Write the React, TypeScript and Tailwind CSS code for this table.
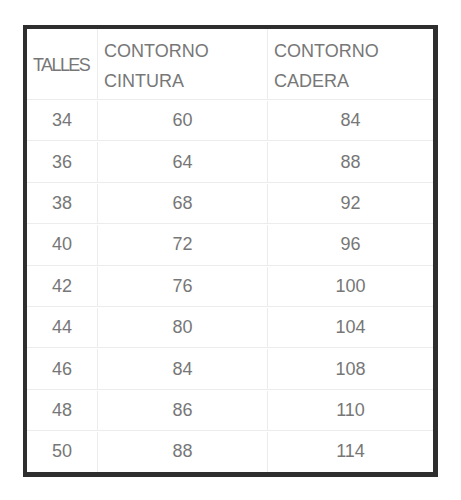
const rows: [string, string, string][] = [
  ["34", "60", "84"],
  ["36", "64", "88"],
  ["38", "68", "92"],
  ["40", "72", "96"],
  ["42", "76", "100"],
  ["44", "80", "104"],
  ["46", "84", "108"],
  ["48", "86", "110"],
  ["50", "88", "114"],
];

const cols = "grid grid-cols-[70px_170px_166px]";

export default function App() {
  return (
    <div className="w-[461px] h-[500px] bg-white pt-[25px] pl-[23px] font-['Liberation_Sans',Arial,sans-serif] text-[18px] text-[#777]">
      <div className="w-[415px] border-[#2e2e2e] border-l-4 border-t-4 border-r-[5px] border-b-[5px] bg-white">
        <div className={`${cols} h-[70px]`}>
          <div className="flex items-center pl-[6px] pt-[3px] tracking-[-1.6px]">TALLES</div>
          <div className="flex flex-col justify-center pl-[6px] pt-[3px] leading-[30px] border-l border-[#ececec]">
            <span>CONTORNO</span>
            <span>CINTURA</span>
          </div>
          <div className="flex flex-col justify-center pl-[6px] pt-[3px] leading-[30px] border-l border-[#ececec]">
            <span>CONTORNO</span>
            <span>CADERA</span>
          </div>
        </div>
        {rows.map(([t, c, h]) => (
          <div key={t} className={`${cols} h-[41.4px] border-t border-[#ececec] pt-[1px]`}>
            <div className="flex items-center justify-center">{t}</div>
            <div className="flex items-center justify-center border-l border-[#ececec]">{c}</div>
            <div className="flex items-center justify-center border-l border-[#ececec]">{h}</div>
          </div>
        ))}
      </div>
    </div>
  );
}
